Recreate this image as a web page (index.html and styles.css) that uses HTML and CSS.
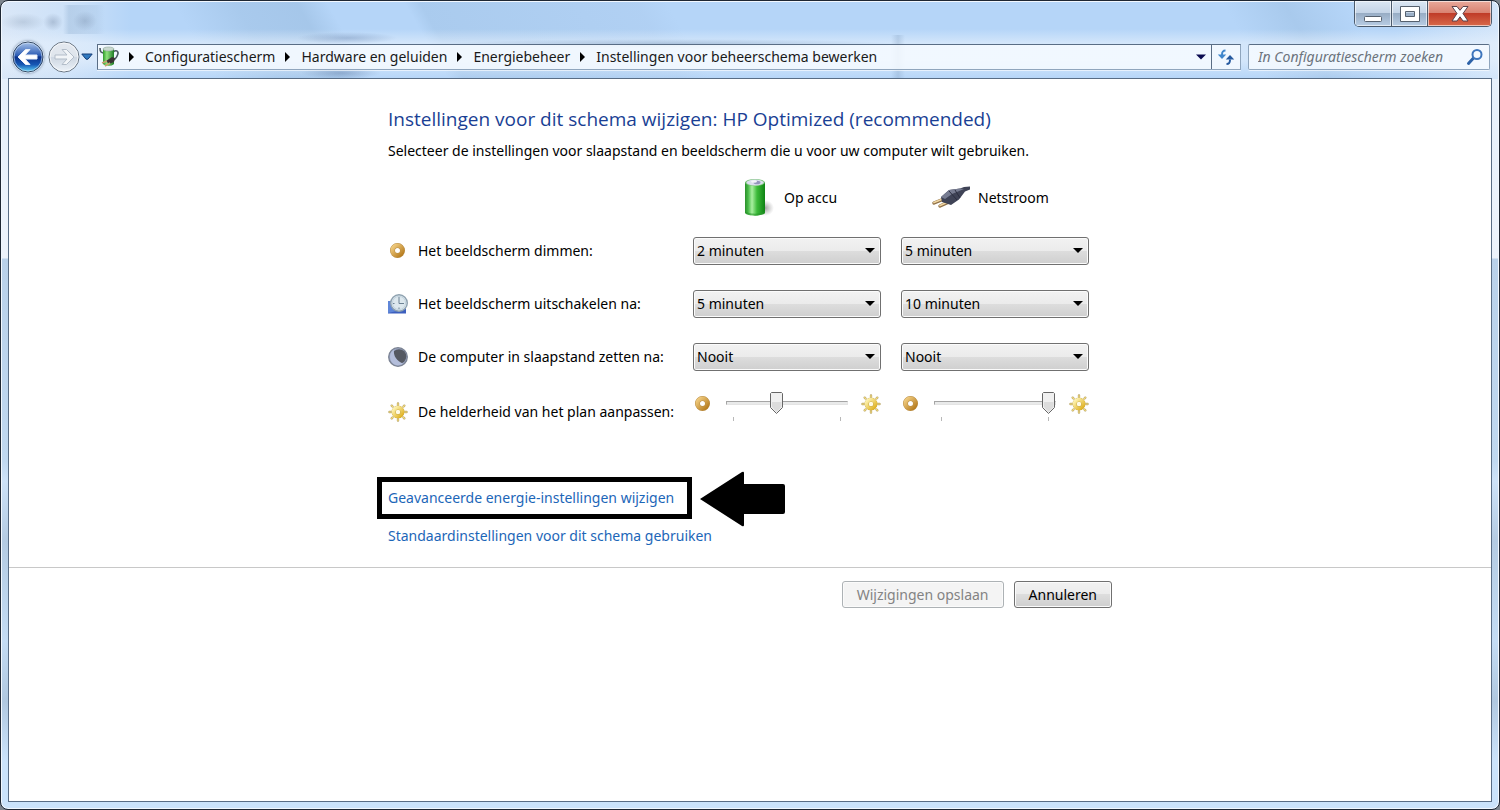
FILE: index.html
```html
<!DOCTYPE html>
<html lang="nl">
<head>
    <meta charset="UTF-8">
    <meta name="viewport" content="width=device-width, initial-scale=1.0">
    <title>Instellingen voor beheerschema bewerken</title>
    <link rel="stylesheet" href="styles.css">
</head>
<body>
    <!-- Shared icons -->
    <svg class="defs" width="0" height="0" aria-hidden="true">
        <defs>
            <linearGradient id="gold" x1="0" y1="0" x2="1" y2="1">
                <stop offset="0" stop-color="#f3cf83"/>
                <stop offset="1" stop-color="#b57a1c"/>
            </linearGradient>
            <linearGradient id="sunny" x1="0" y1="0" x2="1" y2="1">
                <stop offset="0" stop-color="#fff6b8"/>
                <stop offset="1" stop-color="#dfb01e"/>
            </linearGradient>
        </defs>
        <symbol id="icon-dim" viewBox="0 0 20 20">
            <circle cx="9.500" cy="9.500" r="5" fill="none" stroke="#b98d45" stroke-width="5"/>
            <circle cx="9.500" cy="9.500" r="5" fill="none" stroke="url(#gold)" stroke-width="4"/>
        </symbol>
        <symbol id="icon-sun" viewBox="0 0 20 20">
            <g stroke="#b9a566" stroke-width="2.400" stroke-linecap="round">
                <path d="M10 1.500v1M10 17.500v1M1.500 10h1M17.500 10h1M3.700 3.700l.8.8M15.500 15.500l.8.8M16.300 3.700l-.8.8M4.500 15.500l-.8.8"/>
            </g>
            <g stroke="#f4dc7c" stroke-width="1.200" stroke-linecap="round">
                <path d="M10 1.500v1M10 17.500v1M1.500 10h1M17.500 10h1M3.700 3.700l.8.8M15.500 15.500l.8.8M16.300 3.700l-.8.8M4.500 15.500l-.8.8"/>
            </g>
            <circle cx="10" cy="10" r="4.400" fill="#fffbe6" stroke="#c2a23c" stroke-width="4.200"/>
            <circle cx="10" cy="10" r="4.400" fill="none" stroke="url(#sunny)" stroke-width="3.600"/>
        </symbol>
    </svg>

    <div class="window">
        <div class="titlebar">
            <div class="window-buttons">
                <button type="button" class="win-btn win-min" aria-label="Minimaliseren">
                    <svg width="20" height="20" viewBox="0 0 20 20"><rect x="1.500" y="12.500" width="17" height="5" rx="1" fill="#fff" stroke="#55606e"/></svg>
                </button>
                <button type="button" class="win-btn win-max" aria-label="Maximaliseren">
                    <svg width="20" height="20" viewBox="0 0 20 20"><path fill-rule="evenodd" d="M.5 2.500h19v15H.5zM5.500 7.500v5h9v-5z" fill="#fff" stroke="#55606e"/></svg>
                </button>
                <button type="button" class="win-btn win-close" aria-label="Sluiten">
                    <svg width="20" height="20" viewBox="0 0 20 20"><path d="M2 2.500h5l3 3.800 3-3.800h5L13 9.500l5 7.500h-5l-3-4.200L7 17H2l5-7.500z" fill="#fff" stroke="#5a4048"/></svg>
                </button>
            </div>
        </div>

        <div class="navbar">
            <div class="nav-buttons">
                <button type="button" class="nav-btn" aria-label="Terug">
                    <svg width="32" height="32" viewBox="0 0 32 32">
                        <defs>
                            <linearGradient id="backFill" x1="0" y1="0" x2="0" y2="1">
                                <stop offset="0" stop-color="#a9c4ea"/>
                                <stop offset=".45" stop-color="#2c5cb4"/>
                                <stop offset=".5" stop-color="#0b318a"/>
                                <stop offset=".75" stop-color="#1557b4"/>
                                <stop offset="1" stop-color="#5fd8fb"/>
                            </linearGradient>
                        </defs>
                        <circle cx="16" cy="16" r="15" fill="url(#backFill)" stroke="#33465f"/>
                        <circle cx="16" cy="16" r="14" fill="none" stroke="#d5e6f8" stroke-opacity=".6"/>
                        <path d="M6 16l7.500-7.500h4.500l-5 5.500h12v4H13l5 5.500h-4.500z" fill="#fff" stroke="#e6eefa" stroke-linejoin="round"/>
                    </svg>
                </button>
                <button type="button" class="nav-btn" aria-label="Vooruit">
                    <svg width="32" height="32" viewBox="0 0 32 32">
                        <defs>
                            <linearGradient id="nextFill" x1="0" y1="0" x2="0" y2="1">
                                <stop offset="0" stop-color="#e4e9f0"/>
                                <stop offset=".48" stop-color="#dfe5ec"/>
                                <stop offset=".52" stop-color="#ced7e2"/>
                                <stop offset="1" stop-color="#edf3f9"/>
                            </linearGradient>
                        </defs>
                        <circle cx="16" cy="16" r="15" fill="url(#nextFill)" stroke="#66727f"/>
                        <circle cx="16" cy="16" r="14" fill="none" stroke="#fff" stroke-opacity=".7"/>
                        <path d="M26 16l-7.500-7.500H14l5 5.500H7v4h12l-5 5.500h4.500z" fill="#f2f5f8" stroke="#b3bdc9" stroke-linejoin="round"/>
                    </svg>
                </button>
                <button type="button" class="nav-history" aria-label="Recente pagina's">
                    <svg width="12" height="8" viewBox="0 0 12 8"><path d="M.8 1h10.400L7 6.200H5z" fill="#2f79c0" stroke="#163e78"/></svg>
                </button>
            </div>

            <div class="address-bar">
                <svg class="address-icon" width="22" height="22" viewBox="0 0 22 22">
                    <defs>
                        <linearGradient id="greenFill" x1="0" y1="0" x2="1" y2="0">
                            <stop offset="0" stop-color="#2f9a2b"/>
                            <stop offset=".35" stop-color="#8fe27d"/>
                            <stop offset="1" stop-color="#1d7a25"/>
                        </linearGradient>
                    </defs>
                    <path d="M2 2c0 4 1 5 5 5M15 6c4-3 6 0 4.500 3-1 3-3 5-6 6" fill="none" stroke="#4b5962" stroke-width="1.600"/>
                    <path d="M5 3v15c2 2.500 9 2.500 11 0V3z" fill="url(#greenFill)"/>
                    <ellipse cx="10.500" cy="3" rx="5.500" ry="2" fill="#c9d8cf" stroke="#8ba596" stroke-width=".6"/>
                    <path d="M8 15l6-4 3 1-1 4-5 2z" fill="#3a3434"/>
                    <path d="M9 15l-5 2M12 17l-5 3" stroke="#caa070" stroke-width="1.500"/>
                </svg>
                <nav class="breadcrumbs" aria-label="Locatie">
                    <a href="#">Configuratiescherm</a>
                    <a href="#">Hardware en geluiden</a>
                    <a href="#">Energiebeheer</a>
                    <a href="#">Instellingen voor beheerschema bewerken</a>
                </nav>
                <button type="button" class="address-drop" aria-label="Vorige locaties">
                    <svg width="10" height="6" viewBox="0 0 10 6"><path d="M0 .5h10L5 5.500z" fill="#0a0a50"/></svg>
                </button>
                <button type="button" class="address-refresh" aria-label="Vernieuwen">
                    <svg width="18" height="18" viewBox="0 0 18 18">
                        <path d="M8.500 2.500C5.500 2.500 5 4 5 7" fill="none" stroke="#3f86cc" stroke-width="2"/>
                        <path d="M.8 6.500h8.400L5 11z" fill="#3f86cc"/>
                        <path d="M9.500 16c3 0 3.500-1.500 3.500-4.500" fill="none" stroke="#25599f" stroke-width="2"/>
                        <path d="M8.800 11.500h8.400L13 7z" fill="#25599f"/>
                    </svg>
                </button>
            </div>

            <div class="search-box">
                <input type="search" class="search-input" placeholder="In Configuratiescherm zoeken" aria-label="In Configuratiescherm zoeken">
                <svg class="search-icon" width="18" height="18" viewBox="0 0 18 18">
                    <path d="M2.500 15.500l5-5.500" stroke="#2d62a8" stroke-width="3" stroke-linecap="round"/>
                    <circle cx="11" cy="6.500" r="4.500" fill="#f4f9ff" stroke="#3d75bd" stroke-width="2"/>
                </svg>
            </div>
        </div>

        <main class="pane">
            <form class="settings">
                <h1 class="heading">Instellingen voor dit schema wijzigen: HP Optimized (recommended)</h1>
                <p class="intro">Selecteer de instellingen voor slaapstand en beeldscherm die u voor uw computer wilt gebruiken.</p>

                <div class="row row-head">
                    <div class="power-head power-battery">
                        <svg width="40" height="40" viewBox="0 0 40 40">
                            <defs>
                                <linearGradient id="battery" x1="0" y1="0" x2="1" y2="0">
                                    <stop offset="0" stop-color="#2c8f2c"/>
                                    <stop offset=".15" stop-color="#45b845"/>
                                    <stop offset=".35" stop-color="#a9f0a0"/>
                                    <stop offset=".6" stop-color="#3dbb3a"/>
                                    <stop offset="1" stop-color="#0e8213"/>
                                </linearGradient>
                                <radialGradient id="batteryShadow">
                                    <stop offset="0" stop-color="#777" stop-opacity=".7"/>
                                    <stop offset="1" stop-color="#999" stop-opacity="0"/>
                                </radialGradient>
                            </defs>
                            <ellipse cx="28" cy="30" rx="9" ry="8" fill="url(#batteryShadow)"/>
                            <path d="M8 4v31c3 3.500 17 3.500 20 0V4z" fill="url(#battery)"/>
                            <path d="M8 33v2c3 3.500 17 3.500 20 0v-2c-3 3.500-17 3.500-20 0z" fill="#2a972b" opacity=".6"/>
                            <ellipse cx="18" cy="4.500" rx="10" ry="3.500" fill="#7cc47c"/>
                            <ellipse cx="18" cy="4.500" rx="8.600" ry="2.900" fill="#dcdeee"/>
                            <ellipse cx="20" cy="4.500" rx="3.500" ry="1.800" fill="#9494bd"/>
                            <ellipse cx="17" cy="3.500" rx="3" ry="1.300" fill="#f4f4fb"/>
                        </svg>
                        <span>Op accu</span>
                    </div>
                    <div class="power-head power-mains">
                        <svg width="40" height="40" viewBox="0 0 40 40">
                            <path d="M13 21L3 25M19 23.500L9 28" stroke="#8e7047" stroke-width="3.400" stroke-linecap="round"/>
                            <path d="M13 20.500L3 24.500M19 23L9 27.500" stroke="#f0d5a0" stroke-width="1.800" stroke-linecap="round"/>
                            <path d="M10 19l8-7 11-1.500 4-1.500 6-.5v3l-5 2-6 8-8 5.500-9-3z" fill="#3f4356"/>
                            <path d="M10 19l8-7 11-1.500 4 .5-12 5-7 5z" fill="#777c91"/>
                            <path d="M18 13l8 9M24 12l5 8" stroke="#2b2e40" stroke-width="1"/>
                        </svg>
                        <span>Netstroom</span>
                    </div>
                </div>

                <div class="row">
                    <label class="row-label" for="dim-battery">
                        <svg width="20" height="20"><use href="#icon-dim"/></svg>
                        Het beeldscherm dimmen:
                    </label>
                    <select class="select" id="dim-battery">
                        <option>2 minuten</option>
                    </select>
                    <select class="select" aria-label="Het beeldscherm dimmen: Netstroom">
                        <option>5 minuten</option>
                    </select>
                </div>

                <div class="row">
                    <label class="row-label" for="off-battery">
                        <svg width="20" height="20" viewBox="0 0 20 20">
                            <path d="M0 7h8v7h10v5.500H0z" fill="#3c5fbe"/>
                            <path d="M0 7h8v7h10v1L0 19z" fill="#5f86d8"/>
                            <circle cx="11" cy="9" r="8.300" fill="#dde8ee" stroke="#8fa2b0" stroke-width="1.400"/>
                            <circle cx="11" cy="9" r="6.600" fill="none" stroke="#c3d3de"/>
                            <path d="M11 3v6.500h5" fill="none" stroke="#6d8294"/>
                            <path d="M11 13.500v1.500M5 9.500h1.500" stroke="#6d8294"/>
                        </svg>
                        Het beeldscherm uitschakelen na:
                    </label>
                    <select class="select" id="off-battery">
                        <option>5 minuten</option>
                    </select>
                    <select class="select" aria-label="Het beeldscherm uitschakelen na: Netstroom">
                        <option>10 minuten</option>
                    </select>
                </div>

                <div class="row">
                    <label class="row-label" for="sleep-battery">
                        <svg width="20" height="20" viewBox="0 0 20 20">
                            <circle cx="10" cy="10" r="9.300" fill="#9aa5c3" stroke="#7a8292" stroke-width="1.300"/>
                            <circle cx="11" cy="9.500" r="7.300" fill="#555962"/>
                            <path d="M6 2.500C0 6 1 16 8 18c3 .6 5 0 7-1.500C9 14 5 9 6 2.500z" fill="#b4bedb"/>
                        </svg>
                        De computer in slaapstand zetten na:
                    </label>
                    <select class="select" id="sleep-battery">
                        <option>Nooit</option>
                    </select>
                    <select class="select" aria-label="De computer in slaapstand zetten na: Netstroom">
                        <option>Nooit</option>
                    </select>
                </div>

                <div class="row row-brightness">
                    <label class="row-label" for="bright-battery">
                        <svg width="20" height="20"><use href="#icon-sun"/></svg>
                        De helderheid van het plan aanpassen:
                    </label>
                    <div class="brightness">
                        <svg width="20" height="20"><use href="#icon-dim"/></svg>
                        <div class="slider-wrap">
                            <input type="range" class="slider" id="bright-battery" min="0" max="100" value="40">
                            <div class="ticks"></div>
                        </div>
                        <svg width="20" height="20"><use href="#icon-sun"/></svg>
                    </div>
                    <div class="brightness">
                        <svg width="20" height="20"><use href="#icon-dim"/></svg>
                        <div class="slider-wrap">
                            <input type="range" class="slider" min="0" max="100" value="100" aria-label="De helderheid van het plan aanpassen: Netstroom">
                            <div class="ticks"></div>
                        </div>
                        <svg width="20" height="20"><use href="#icon-sun"/></svg>
                    </div>
                </div>

                <div class="links">
                    <div class="highlight">
                        <a href="#" class="link">Geavanceerde energie-instellingen wijzigen</a>
                        <svg class="arrow" width="86" height="56" viewBox="0 0 86 56"><path d="M1 28L43 1q2-1 2 1v11h39q2 0 2 2v26q0 2-2 2H45v11q0 2-2 1z"/></svg>
                    </div>
                    <a href="#" class="link">Standaardinstellingen voor dit schema gebruiken</a>
                </div>
            </form>

            <div class="actions">
                <div class="actions-inner">
                    <button type="submit" class="btn" disabled>Wijzigingen opslaan</button>
                    <button type="button" class="btn">Annuleren</button>
                </div>
            </div>
        </main>
    </div>
</body>
</html>
```

FILE: styles.css
```css
:root {
    --text: #000000;
    --heading: #1a3f94;
    --link: #1c66b8;
    --glass: #b5d5f8;
    --frame: #1e2733;
    --pane-border: #596d85;
    --face: linear-gradient(#f2f2f2, #ebebeb 50%, #dddddd 50%, #cfcfcf);
}

* {
    margin: 0;
    padding: 0;
    box-sizing: border-box;
}

body {
    font-family: 'Noto Sans', 'Open Sans', sans-serif;
    font-size: 14px;
    line-height: 20px;
    color: var(--text);
    background: #7d858e;
}

button,
input,
select {
    font: inherit;
    color: inherit;
}

a {
    text-decoration: none;
}

svg {
    display: block;
    flex: none;
}

.defs {
    position: absolute;
}

/* Window frame */
.window {
    display: flex;
    flex-direction: column;
    min-height: 100vh;
    padding: 0 7px 7px;
    border: 1px solid var(--frame);
    border-radius: 8px;
    box-shadow: inset 0 0 0 1px #f2f8ff;
    /* blurred desktop seen through the glass: tabs, page texts, haze, streaks, side edges */
    background:
        radial-gradient(closest-side, rgba(110, 130, 155, 0.25), transparent) 0 12px / 44px 18px no-repeat,
        radial-gradient(closest-side, rgba(90, 110, 140, 0.3), transparent) 42px 12px / 20px 18px no-repeat,
        radial-gradient(closest-side, rgba(90, 110, 140, 0.25), transparent) 72px 10px / 24px 20px no-repeat,
        linear-gradient(90deg, transparent, rgba(150, 180, 212, 0.4) 6px, rgba(150, 180, 212, 0.2) 80%, transparent) 62px 4px / 42px 29px no-repeat,
        radial-gradient(closest-side, rgba(85, 115, 160, 0.35), transparent) 296px 31px / 100px 12px no-repeat,
        radial-gradient(closest-side, rgba(85, 115, 160, 0.4), transparent) 300px 66px / 80px 12px no-repeat,
        radial-gradient(closest-side, rgba(110, 140, 175, 0.4), transparent) 440px 38px / 460px 10px no-repeat,
        linear-gradient(90deg, transparent, rgba(90, 120, 155, 0.2), transparent) 890px 34px / 14px 44px no-repeat,
        linear-gradient(transparent 28px, rgba(231, 241, 252, 0.6) 42px, rgba(231, 241, 252, 0.6) 60px, transparent 78px) 0 0 / 100% 78px no-repeat,
        linear-gradient(90deg, rgba(226, 235, 247, 0.8), rgba(222, 234, 248, 0.6) 64px, transparent 130px) 0 0 / 100% 78px no-repeat,
        linear-gradient(90deg, transparent 93%, rgba(225, 237, 251, 0.7)) 0 0 / 100% 78px no-repeat,
        linear-gradient(60deg, transparent 14%, rgba(150, 185, 220, 0.4) 18%, rgba(150, 185, 220, 0.5) 22%, transparent 24%, transparent 29%, rgba(150, 185, 220, 0.35) 30%, rgba(160, 190, 225, 0.2) 44%, transparent 46%, transparent 82%, rgba(150, 185, 220, 0.4) 86%, transparent 90%) 0 0 / 100% 78px no-repeat,
        linear-gradient(var(--glass) 78px, #e6f0fb 78px, #edf3fb 257px, #b9d1ea 258px, #c0d8f0 460px, #cde2f8 480px, #b4cbe2 540px, #c4dcf4 640px, #b0c8e0 700px, #cbe3fb 760px);
}

.titlebar {
    display: flex;
    justify-content: flex-end;
    height: 28px;
    margin-bottom: 12px;
}

.window-buttons {
    display: flex;
    height: 26px;
    border: 1px solid #4b5a6c;
    border-top: none;
    border-radius: 0 0 5px 5px;
    overflow: hidden;
}

.win-btn {
    display: flex;
    align-items: center;
    justify-content: center;
    width: 37px;
    border: none;
    border-right: 1px solid #4b5a6c;
    background: linear-gradient(#dbe7f4, #c3d3e6 48%, #98adc5 50%, #b8cde4);
    box-shadow: inset 0 0 0 1px rgba(255, 255, 255, 0.6);
}

.win-max {
    width: 36px;
}

.win-close {
    width: 63px;
    border-right: none;
    background: linear-gradient(#e9a99b, #d98271 48%, #c03c28 50%, #d8694a);
}

/* Navigation */
.navbar {
    display: flex;
    align-items: center;
    gap: 7px;
    height: 32px;
    margin: 0 2px 5px 4px;
}

.nav-buttons {
    display: flex;
    align-items: center;
    gap: 4px;
    margin-right: -3px;
}

.nav-btn,
.nav-history {
    border: none;
    background: none;
}

.nav-history {
    margin-left: -3px;
}

.nav-btn:first-child {
    border-radius: 16px;
    box-shadow: 0 0 2px 1px rgba(120, 140, 165, 0.5);
}

.address-bar,
.search-box {
    display: flex;
    align-items: center;
    height: 26px;
    border: 1px solid #8fa5bd;
    border-top-color: #596d85;
    background: rgba(246, 250, 255, 0.85);
    box-shadow: 0 1px 0 rgba(255, 255, 255, 0.6);
}

.address-bar {
    flex: 1;
    border-left-color: #596d85;
}

.breadcrumbs {
    display: flex;
    flex: 1;
    margin-left: 9px;
}

.breadcrumbs a {
    display: flex;
    align-items: center;
    margin-right: 10px;
    color: #1a1a1a;
    white-space: nowrap;
}

.breadcrumbs a::before {
    content: "";
    margin-right: 11px;
    border: 5px solid transparent;
    border-left-color: #000000;
    border-right-width: 0;
}

.address-drop,
.address-refresh {
    display: flex;
    align-items: center;
    justify-content: center;
    align-self: stretch;
    width: 20px;
    border: none;
    background: none;
}

.address-refresh {
    width: 29px;
    border-left: 1px solid #596d85;
}

.search-box {
    width: 242px;
    padding: 0 5px 0 9px;
    border-radius: 2px;
}

.search-input {
    flex: 1;
    min-width: 0;
    border: none;
    outline: none;
    background: none;
    appearance: none;
}

.search-input::placeholder {
    color: #6b737c;
    font-style: italic;
}

/* Content */
.pane {
    flex: 1;
    border: 1px solid var(--pane-border);
    background: #ffffff;
}

.settings,
.actions-inner {
    width: 100%;
    max-width: 724px;
    margin: 0 auto;
}

.settings {
    padding: 28px 0 21px;
}

.heading {
    margin-bottom: 10px;
    font-family: 'Open Sans', 'Noto Sans', sans-serif;
    font-size: 19px;
    font-weight: 400;
    line-height: 24px;
    color: var(--heading);
}

.intro {
    margin-bottom: 17px;
}

.row {
    display: grid;
    grid-template-columns: 285px 188px 188px;
    column-gap: 20px;
    align-items: center;
    min-height: 53px;
}

.row-head {
    min-height: 46px;
    align-items: start;
}

.power-head {
    display: flex;
    align-items: center;
    gap: 7px;
}

.power-battery {
    grid-column: 2;
    padding-left: 44px;
}

.power-mains {
    padding-left: 30px;
}

.row-label {
    display: flex;
    align-items: center;
    gap: 10px;
    line-height: 22px;
    white-space: nowrap;
}

.select {
    width: 100%;
    height: 28px;
    padding: 1px 20px 0 3px;
    border: 1px solid #707070;
    border-radius: 3px;
    appearance: none;
    background:
        url("data:image/svg+xml,%3Csvg xmlns='http://www.w3.org/2000/svg' width='10' height='6'%3E%3Cpath d='M0 0h10L5 5z'/%3E%3C/svg%3E") right 5px center no-repeat,
        var(--face);
    box-shadow: inset 0 0 0 1px #fbfbfb;
}

/* Brightness sliders */
.row-brightness {
    min-height: 58px;
}

.brightness {
    display: flex;
    gap: 13px;
    padding-bottom: 12px;
}

.brightness > svg {
    margin-top: 2px;
}

.slider-wrap {
    flex: 1;
}

.slider {
    display: block;
    width: 100%;
    height: 22px;
    appearance: none;
    background: none;
}

.slider::-webkit-slider-runnable-track {
    height: 4px;
    border: 1px solid #e4e4e4;
    border-top-color: #a5a5a5;
    border-left-color: #a5a5a5;
    background: #e9eaea;
}

.slider::-webkit-slider-thumb {
    appearance: none;
    width: 13px;
    height: 22px;
    margin-top: -10px;
    background: url("data:image/svg+xml,%3Csvg xmlns='http://www.w3.org/2000/svg' width='13' height='22'%3E%3Cpath d='M1.500 .5h10l1 1v14l-6 6-6-6v-14z' fill='%23f0f0f0' stroke='%23666666'/%3E%3Cpath d='M2 10h9.500v5l-5 5L2 15z' fill='%23dcdcdc'/%3E%3C/svg%3E") no-repeat;
}

.ticks {
    height: 4px;
    margin: 3px 7px 0;
    border: 1px solid #b8b8b8;
    border-width: 0 1px;
}

/* Links */
.links {
    display: flex;
    flex-direction: column;
    align-items: flex-start;
    gap: 18px;
    padding-top: 47px;
}

.link {
    color: var(--link);
}

.highlight {
    position: relative;
}

.highlight::before {
    content: "";
    position: absolute;
    inset: -11px -18px -11px -11px;
    border: 5px solid #000000;
    pointer-events: none;
}

.arrow {
    position: absolute;
    top: -17px;
    left: calc(100% + 25px);
}

/* Buttons */
.actions {
    padding-top: 13px;
    border-top: 1px solid #c8c8c8;
}

.actions-inner {
    display: flex;
    justify-content: flex-end;
    gap: 10px;
}

.btn {
    height: 27px;
    padding: 0 14px;
    border: 1px solid #707070;
    border-radius: 3px;
    background: var(--face);
    box-shadow: inset 0 0 0 1px #fbfbfb;
}

.btn:disabled {
    border-color: #adb2b5;
    background: #f4f4f4;
    color: #838383;
}
```
